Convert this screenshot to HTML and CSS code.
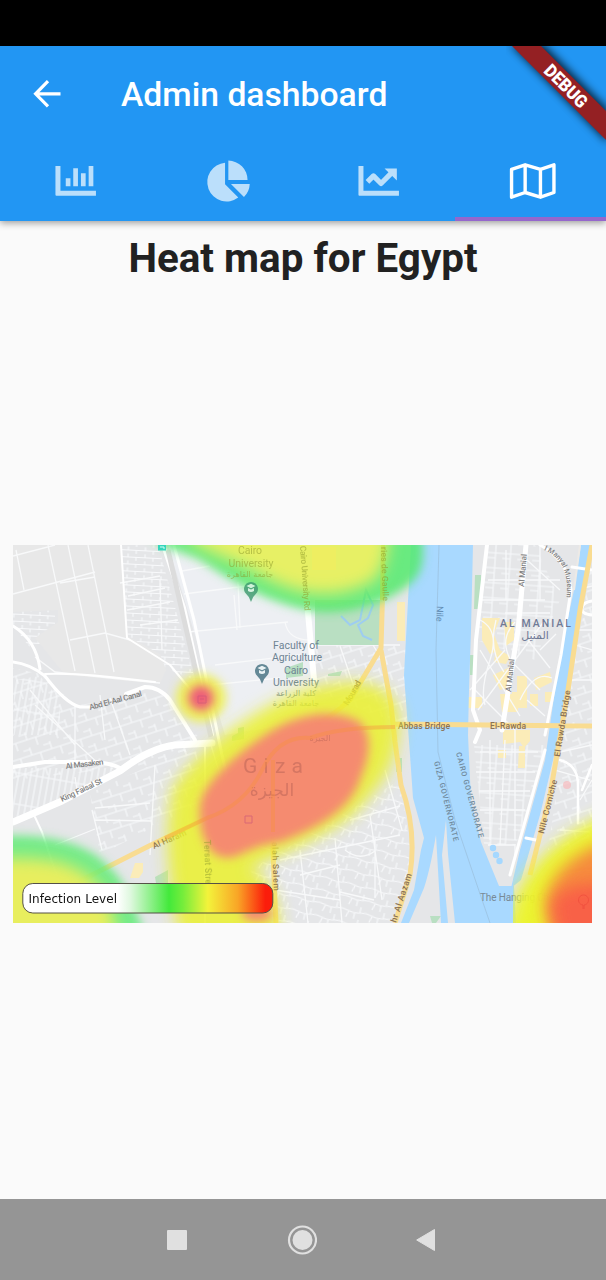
FILE: index.html
```html
<!DOCTYPE html>
<html lang="en">
<head>
<meta charset="utf-8">
<title>Admin dashboard</title>
<link rel="stylesheet" href="styles.css">
</head>
<body>
<div class="status"></div>
<header class="appbar">
  <div class="toolbar">
    <svg class="back" viewBox="0 0 28 28"><path d="M15 1.2 2.6 13.8 15 26.3M2.6 13.8H27.5"/></svg>
    <h1 class="title">Admin dashboard</h1>
  </div>
  <nav class="tabs">
    <div class="tab"><svg class="icon" viewBox="51.75 157 48 48"><path d="M55.2 166h5v24.8h35.5v4.9H56.2q-1 0-1-1zM65.5 178.3h4.7v7.9h-4.7zM73 168.3h4.7v17.9H73zM80.7 173.3h4.7v12.9h-4.7zM88.4 166h4.7v20.2h-4.7z"/></svg></div>
    <div class="tab"><svg class="icon" viewBox="203.25 157 48 48"><path d="M225.3 162.7V184.3L238.5 197.6A19.4 19.4 0 1 1 225.3 162.7ZM228.6 160.6A19.4 19.4 0 0 1 247.8 180H228.6ZM231.2 184H250A19.5 19.5 0 0 1 244.2 197Z"/></svg></div>
    <div class="tab"><svg class="icon" viewBox="354.75 157 48 48"><path d="M358.2 166h5v24.8h35.5v4.9h-39.5q-1 0-1-1zM384.3 168.4h12.3v12.2z"/><path class="trend" d="m367.2 181.9 6-6 7.6 7.6 9.8-9.8"/></svg></div>
    <div class="tab active"><svg class="icon" viewBox="506.25 157 48 48"><path class="fold" d="M511.8 169.4 525.4 164.8 540.7 169.4 554.2 164.8V192.5L540.7 197.2 525.4 192.5 511.8 197.2ZM525.4 164.8v27.7M540.7 169.4v27.8"/></svg></div>
  </nav>
  <svg class="banner" viewBox="506 46 100 110">
    <defs><filter id="shade" x="-30%" y="-30%" width="160%" height="160%"><feGaussianBlur stdDeviation="4"/></filter></defs>
    <path d="M510 44H543L608 109V143Z" fill="#000" opacity=".75" filter="url(#shade)"/>
    <path d="M510 44H539L608 113V142Z" fill="#942023"/>
    <text x="566" y="92.3" transform="rotate(45 566 86)" text-anchor="middle" textLength="53" lengthAdjust="spacingAndGlyphs">DEBUG</text>
  </svg>
</header>
<main class="content">
  <h2 class="heading">Heat map for Egypt</h2>
  <div class="stage">
  <svg class="map" viewBox="13 545 579 378">
    <defs>
      <pattern id="g1" width="17" height="7" patternUnits="userSpaceOnUse" patternTransform="rotate(3)"><path d="M0 3.5H17M4 0V3.5M12 3.5V7"/></pattern>
      <pattern id="g2" width="6" height="31" patternUnits="userSpaceOnUse" patternTransform="rotate(10)"><path d="M3 0V31M0 14H6"/></pattern>
      <pattern id="g3" width="21" height="16" patternUnits="userSpaceOnUse" patternTransform="rotate(-18)"><path d="M0 8H21M7 0V8M16 8V16M0 2H7"/></pattern>
      <pattern id="g4" width="15" height="15" patternUnits="userSpaceOnUse" patternTransform="rotate(4)"><path d="M0 7H15M8 0V15M0 12H8"/></pattern>
      <pattern id="g5" width="24" height="13" patternUnits="userSpaceOnUse" patternTransform="rotate(14)"><path d="M0 5 12 7 24 5M7 6 5 13M18 0V6M13 7V13"/></pattern>
      <filter id="b4" x="-30%" y="-30%" width="160%" height="160%"><feGaussianBlur stdDeviation="5"/></filter>
      <filter id="b7" x="-30%" y="-30%" width="160%" height="160%"><feGaussianBlur stdDeviation="8"/></filter>
      <clipPath id="corner"><path d="M513 780H600V930H513Z"/></clipPath>
      <linearGradient id="scale"><stop offset=".38" stop-color="#fff"/><stop offset=".43" stop-color="#dff8df"/><stop offset=".585" stop-color="#43e93b"/><stop offset=".64" stop-color="#75ed3b"/><stop offset=".74" stop-color="#f3f33b"/><stop offset=".86" stop-color="#f9a526"/><stop offset=".97" stop-color="#fb1d0b"/></linearGradient>
    </defs>
    <rect x="13" y="545" width="580" height="378" fill="#e5e6e8"/>
    <g>
      <path fill="url(#g1)" d="M121 545H158L195 680 165 668 128 638ZM13 612 55 610V640L30 648 13 625Z"/>
      <path fill="url(#g3)" d="M13 668 45 675 75 706 160 690 205 745 150 765 13 780Z"/>
      <path fill="url(#g2)" d="M13 768 120 768 13 822ZM14 680 40 676 60 700 60 735 14 735Z"/>
      <path fill="url(#g3)" d="M90 793 195 745 205 800 100 855Z"/>
      <path fill="url(#g5)" d="M250 870 400 780 412 860 390 923H275Z"/>
      <path fill="url(#g4)" d="M488 545H535L560 600 535 660 476 640ZM474 745H548L516 845H484Z"/>
      <path fill="url(#g3)" d="M592 560V850L548 850 575 660ZM315 645H410V730L315 690Z"/>
    </g>
    <path class="land" d="M13 545H121L127 636 160 654 166 670 160 684 65 675 35 638 58 622 58 610 13 612Z"/>
    <path fill="#edeff3" d="M168 545H380V645H315V720L225 735Z"/>
    <g fill="#fbecb8">
      <path d="M482 618H500L494 634 500 650 490 654 482 640ZM504 622H514V640L506 646ZM493 675 512 666V686L500 690ZM496 648 510 656 506 664 494 662ZM500 694H518V712H502ZM517 676H527V692H517ZM503 730H530V741L524 748 520 742 503 744ZM512 692H527V708H512ZM534 678 550 672 552 682 536 690ZM530 694H538V706H530ZM545 692H552V702H545ZM468 697H482V708H468ZM519 746H525V768H518ZM498 750H506V758H498ZM397 602H405V641H397ZM135 863H143V872L139 878H130Z"/>
    </g>
    <g class="thin">
      <path d="M13 556 55 545M13 594 95 572M16 550 24 590M48 545 75 671M68 545 95 673M88 545 114 672M70 640 105 633 130 640M60 583 95 577M35 657 55 672 110 678 160 683"/>
      <path d="M184 594 285 581M234 595 237 630M188 632 288 622M285 622Q288 640 310 640M182 571 210 566M215 665 300 655M210 685 280 678M238 582 240 628M315 645H400M340 646 355 690M370 640 385 665M210 742 240 840 270 850"/>
      <path d="M120 583 160 576M128 596 165 588M127 610 170 602M140 625 178 620M160 580 162 650M75 706V760M110 698 130 755M35 705 100 765M155 765 150 855M95 808 150 803M95 820 152 821M55 845 95 829M92 810 102 850M75 777 77 790M100 695 105 740M30 690 75 745"/>
      <path d="M280 860 400 835M335 838 342 923M300 850 308 923M370 815 382 900M275 890 340 900M385 770 402 830M375 838V898M345 850Q360 862 375 851M340 892 374 900M300 875 340 865M350 820 400 806"/>
      <path d="M480 620Q500 630 490 660T485 705M496 620Q488 650 504 672M515 622Q498 640 512 662L540 690M480 650 520 716M470 690 505 650M478 710 530 640M515 660 545 620M528 640 550 668M540 650 556 634M475 690 515 730M520 700Q534 670 552 678M527 700 545 716M480 752H538M476 772H535M479 791H530M480 810H525M490 740V840M505 740 500 845M515 730V840M488 845H515V860M488 580H560M478 600H545M505 613H550M506 550V600M527 560 560 590M540 545V600"/>
      <path d="M575 590 592 586M577 630 592 630M575 645 592 650M570 680H592M560 752 592 745M555 770 590 780M580 800 592 780M560 830 590 832"/>
    </g>
    <g fill="#b9dfc2"><path d="M475 575H481V609H474ZM470 655H475V675H470ZM315 600H380V645H315ZM328 674 342 671 340 676 328 676ZM286 668 303 662V676L286 678ZM232 736 238 733V728L244 727V739L232 741ZM155 877 168 870 168 895H158ZM430 916H441L436 923H432ZM396 758H402V772H396Z"/></g>
    <path class="water" d="M411 545H473L471 630 469 690 468 735 471 800 481 842 499 886H514L516 923H455L448 854 446 820 442 855 448 923H441L436 835Q430 870 424 888L409 923H401L414 890 421 850 424 838 413 798 410 755 404 675Z"/>
    <path class="water" d="M581 545H592L585 590 574 650 559 735 540 815 521 880 511 888 520 850 545 760 560 655 574 590Z"/>
    <path d="M580 545 574 590" fill="none" stroke="#edeae6" stroke-width="2"/>
    <path d="M439 545 436 650 438 752 455 820 478 888 490 923" fill="none" stroke="#9cc2df" stroke-width=".8"/>
    <g fill="#a5d8ff"><circle cx="493" cy="848" r="3.2"/><circle cx="496" cy="855" r="3.2"/><circle cx="499.5" cy="861" r="3.2"/></g>
    <path d="M341 616 350 625 360 620 366 590 373 605 368 618 358 625 363 636 372 640" fill="none" stroke="#9ecdf0" stroke-width="2"/>
    <g class="road">
      <path d="M163 545 184 608 212 735" stroke-width="4"/><path d="M174 545 194 620 222 755 245 850" stroke-width="3"/>
      <path d="M13 626Q36 640 40 669M13 662Q30 664 45 676Q65 703 80 707L90 707" stroke-width="3"/><path d="M126 694 145 687Q160 687 170 700L195 740" stroke-width="4"/>
      <path d="M13 822 62 801 120 771Q150 748 175 745L212 743" stroke-width="7"/>
      <path d="M13 767 45 762 95 762Q110 763 120 768" stroke-width="4"/><path d="M35 817 42 832 58 880M121 545 127 638 170 665 195 695M45 674Q70 673 110 677L155 682M205 745V923" stroke-width="2"/>
      <path d="M302 545 314 680" stroke-width="6"/><path d="M487 545 476 640 473 710 480 730 475 742" stroke-width="4"/><path d="M526 545 518 630 502 730" stroke-width="5"/><path d="M540 545Q568 560 571 590L561 655 545 735M510 875 545 750" stroke-width="3"/><path d="M572 567 592 570M526 838 536 840" stroke-width="3"/><path d="M560 760Q578 765 578 785V823M582 790 592 765" stroke-width="2.5"/>
      <path d="M592 601Q583 602 582 608T592 615"/>
    </g>
    <path d="M168 550 211 737" stroke="#dcdcdc" stroke-width="5" fill="none"/>
    <g class="gold">
      <path d="M384 545 381 648 350 700Q310 736 273 738Q270 800 276 923M78 882 149 846 207 818Q245 805 262 770T310 738"/>
      <path d="M381 650 391 705 395 742 401 785Q417 830 410 875L395 923M395 724 592 726M592 545 580 610 568 690 550 795 530 875"/>
    </g>
    <g class="label roads">
      <text x="90" y="710" transform="rotate(-15 90 710)" textLength="54">Abd El-Aal Canal</text>
      <text x="66" y="769" transform="rotate(-7 66 769)" textLength="38">Al Masaken</text>
      <text x="62" y="802" transform="rotate(-25 62 802)" textLength="45">King Faisal St</text>
      <text x="524" y="587" transform="rotate(-85 524 587)" textLength="33">Al Manial</text>
      <text x="511" y="692" transform="rotate(-84 511 692)" textLength="33">Al Manial</text>
      <path id="curve" d="M544 550Q572 562 566 602" fill="none"/><text class="museum"><textPath href="#curve">l Manyal Museum</textPath></text>
    </g>
    <g class="label brown">
      <text x="154" y="849" transform="rotate(-23 154 849)" textLength="36">Al Haram</text>
      <text x="398" y="728.5" textLength="52">Abbas Bridge</text><text x="490" y="728.5" textLength="36">El-Rawda</text>
      <text x="560" y="757" transform="rotate(-81 560 757)" textLength="67">El Rawda Bridge</text>
      <text x="544" y="834" transform="rotate(-76 544 834)" textLength="55">Nile Corniche</text>
      <text x="396" y="923" transform="rotate(-72 396 923)" textLength="51">hr Al Aazam</text>
      <text x="272" y="842" transform="rotate(88 272 842)" textLength="49">alah Salem</text>
      <text x="348" y="706" transform="rotate(-60 348 706)" textLength="27">Mourad</text>
    </g>
    <g class="label places" text-anchor="middle">
      <text x="296" y="648.5" textLength="46">Faculty of</text><text x="297" y="661" textLength="50">Agriculture</text><text x="296" y="673.5" textLength="24">Cairo</text><text x="296" y="686" textLength="46">University</text>
      <text x="296" y="696" class="small">كلية الزراعة</text><text x="296" y="706" class="small">جامعة القاهرة</text>
    </g>
    <g class="pin" id="pin"><path d="M262 684Q260 678 256 674.5A7 7 0 1 1 268 674.5Q264 678 262 684Z"/><path class="cap" d="M257.5 668 262 665.8 266.5 668 262 670.2ZM259 670V673Q262 675 265 673V670L262 671.6Z"/></g>
    <text class="governorate" x="434" y="762" transform="rotate(76 434 762)" textLength="82">GIZA GOVERNORATE</text>
    <text class="governorate" x="456" y="753" transform="rotate(75 456 753)" textLength="88">CAIRO GOVERNORATE</text>
    <text x="437" y="606" transform="rotate(92 437 606)" class="nile">Nile</text>
    <g fill="#707a96"><text x="500" y="626.5" textLength="71" class="district">AL MANIAL</text><text x="535" y="639" class="arabic" text-anchor="middle">المنيل</text></g>
    <text x="480" y="901" class="hang" textLength="88">The Hanging Church</text>
    <g filter="url(#b4)">
      <path d="M150 525H420Q429 568 412 582C390 602 350 616 312 611 265 602 230 580 200 560 180 550 160 549 150 535Z" fill="#54ea6c" opacity=".85"/>
      <path d="M0 836C52 833 90 846 107 865 125 880 130 898 148 940H0Z" fill="#60ec78" opacity=".85"/>
      <ellipse cx="201" cy="698" rx="25" ry="24" fill="#eef04c" opacity=".9"/>
    </g>
    <g filter="url(#b7)">
      <path d="M190 500H388Q393 574 367 584C330 602 292 592 267 578 235 560 210 554 190 540Z" fill="#eef062" opacity=".95"/>
      <path d="M-20 860C43 855 70 861 92 879 107 891 114 905 119 960H-20Z" fill="#eeee5d" opacity=".95"/>
    </g>
    <g filter="url(#b4)"><circle cx="201" cy="698" r="12.5" fill="#ee5d78"/></g>
    <g filter="url(#b7)"><path d="M172 790C184 768 218 736 246 720 282 696 310 684 347 682 378 680 403 694 399 730 394 765 389 778 354 814 325 838 280 853 249 870Q278 875 280 940H180Q160 850 172 790Z" fill="#eaf02c" opacity=".86"/></g>
    <g filter="url(#b4)"><path d="M201 800C209 777 240 752 265 735 294 714 331 708 356 720 374 730 370 757 361 777 351 811 317 828 281 842 245 846 237 863 219 856 202 849 197 819 201 800Z" fill="#f58772" opacity=".97"/><ellipse cx="257" cy="913" rx="15" ry="8" fill="#f58772"/></g>
    <g clip-path="url(#corner)"><path filter="url(#b7)" d="M620 808C570 828 535 855 516 895L500 950H620Z" fill="#ecf42b" opacity=".96"/><path filter="url(#b7)" d="M620 838C576 848 548 875 545 905L555 960H620Z" fill="#f68a3e"/><path filter="url(#b7)" d="M620 885C570 880 550 892 552 912L565 960H620Z" fill="#f95a48" opacity=".85"/></g>
    <g class="veil"><text x="243" y="773" textLength="60" class="giza">Giza</text><text x="272" y="796" class="giza-ar" text-anchor="middle">الجيزة</text><text x="320" y="741" text-anchor="middle" class="small">الجيزة</text></g>
    <path class="buried" d="M165 838 207 818Q245 805 262 770T310 738Q340 727 395 727M273 760V832"/>
    <path class="buried pale" d="M383 545 382 600"/>
    <rect x="312" y="547" width="24" height="23" fill="#f3ec5f" opacity=".6"/>
    <g class="label places faded" text-anchor="middle"><text x="250" y="554" textLength="24">Cairo</text><text x="251" y="567" textLength="45">University</text><text x="250" y="577" class="small">جامعة القاهرة</text></g>
    <g class="label brown faded">
      <text x="300" y="546" transform="rotate(86 300 546)" textLength="65">Cairo University Rd</text>
      <text x="381" y="547" transform="rotate(88 381 547)" textLength="54">ries de Gaulle</text>
      <text x="204" y="840" transform="rotate(88 204 840)" textLength="52">Tersat Street</text>
    </g>
    <g class="green-pin"><use href="#pin" x="-11" y="-82"/></g>
    <g fill="none" stroke="#cf5a78" opacity=".7"><path d="M198 696H206V703H198ZM200 699H204M245 816H252V823H245Z"/><path d="M583 909V905A5 5 0 1 1 584 905V909" stroke="#ee4b3c"/></g>
    <rect x="158" y="545" width="8" height="5.5" fill="#35d5bb"/><path d="M160 547H164V549" stroke="#d1fff3" fill="none"/>
    <circle cx="567" cy="785" r="4" fill="#f9b7ba" opacity=".65"/>
    <rect x="22.8" y="883.5" width="250" height="29.5" rx="10" fill="url(#scale)" stroke="#555147"/>
    <text x="28.5" y="902.5" class="legend" textLength="88.5">Infection Level</text>
  </svg>
  </div>
</main>
<footer class="system">
  <svg viewBox="0 0 30 30"><rect x="5" y="5" width="20" height="20" rx="1"/></svg>
  <svg viewBox="0 0 30 30"><circle cx="15.5" cy="15" r="13.5" fill="none" stroke="#e0e0e0" stroke-width="2.2"/><circle cx="15.5" cy="15" r="10"/></svg>
  <svg viewBox="0 0 30 30"><path d="M4.7 15 22.5 4.5V25.5Z" stroke="#e0e0e0" stroke-linejoin="round"/></svg>
</footer>
</body>
</html>
```
FILE: styles.css
```css
* { box-sizing: border-box; }
body { margin: 0; width: 606px; height: 1280px; display: flex; flex-direction: column; background: #fafafa; font-family: Roboto, "Noto Sans", sans-serif; overflow: hidden; }
.status { height: 46px; background: #000; flex: none; }
.appbar { position: relative; z-index: 1; flex: none; height: 175px; background: #2296f3; box-shadow: 0 2px 7px rgba(0,0,0,.38); }
.toolbar { display: flex; align-items: center; height: 95px; padding-left: 33px; gap: 60px; }
.back { width: 28px; height: 28px; fill: none; stroke: #fff; stroke-width: 3.2; }
.title { margin: 3px 0 0; color: #fff; font-size: 33.7px; font-weight: 500; line-height: 40px; white-space: nowrap; }
.tabs { display: grid; grid-template-columns: repeat(4, 1fr); height: 80px; }
.tab { display: flex; justify-content: center; align-items: center; }
.tab.active { border-bottom: 4px solid #9567cc; padding-top: 4px; }
.icon { width: 48px; height: 48px; fill: #bbdffb; overflow: visible; }
.trend { fill: none; stroke: #bbdffb; stroke-width: 5.2; stroke-linejoin: round; }
.fold { fill: none; stroke: #fff; stroke-width: 3.4; stroke-linejoin: round; }
.banner { position: absolute; top: 0; right: 0; width: 100px; height: 110px; overflow: hidden; }
.banner text { fill: #fff; font: 900 18px Roboto, sans-serif; }
.content { flex: 1; display: flex; flex-direction: column; align-items: center; padding-top: 14px; }
.heading { margin: 0; height: 48px; line-height: 48px; font-size: 40.4px; font-weight: 700; color: #212121; white-space: nowrap; }
.stage { flex: 1; width: 100%; padding: 262px 14px 0 13px; }
.map { display: block; width: 579px; height: 378px; }
pattern path { fill: none; stroke: #f8f9fb; stroke-width: 1.1; }
.land { fill: #e8e8e8; }
.thin { fill: none; stroke: #f8f9fa; stroke-width: 1.3; }
.water { fill: #a9d9ff; }
.road { fill: none; stroke: #fff; stroke-width: 3; stroke-linecap: round; stroke-linejoin: round; }
.gold { fill: none; stroke: #f9dc91; stroke-width: 5; stroke-linejoin: round; }
.label { font: 500 8px Roboto, "Noto Sans", "DejaVu Sans", sans-serif; }
.roads { fill: #808080; }
.museum { font-size: 7.2px; }
.brown { fill: #8a7154; font-size: 8.5px; }
.places { fill: #6e8493; font-size: 10.5px; font-weight: 400; }
.faded { fill: #8f9b2c; opacity: .55; }
.small, .arabic { font: 8px "DejaVu Sans", sans-serif; }
.arabic { font-size: 11px; }
.pin { fill: #648896; }
.green-pin { filter: hue-rotate(-50deg) saturate(2); opacity: .8; }
.cap { fill: #e9f2f4; }
.governorate { fill: #70899c; font: 500 7.5px Roboto, sans-serif; }
.nile { fill: #638eb5; font: 9px Roboto, sans-serif; }
.district { font: 500 10.5px Roboto, sans-serif; }
.hang { fill: #788a96; font: 10px Roboto, sans-serif; }
.giza { font: 21px Roboto, sans-serif; }
.giza-ar { font: 17px "DejaVu Sans", sans-serif; }
.veil { fill: #c96e5e; opacity: .72; }
.buried { fill: none; stroke: #f7923e; stroke-width: 4; opacity: .4; }
.pale { stroke: #c9d93a; }
.legend { fill: #111; font: 12px "DejaVu Sans", sans-serif; }
.system { flex: none; height: 81px; display: flex; align-items: center; justify-content: center; gap: 95px; padding: 1px 2px 0 0; background: #959595; }
.system svg { width: 30px; height: 30px; fill: #e0e0e0; }
```
